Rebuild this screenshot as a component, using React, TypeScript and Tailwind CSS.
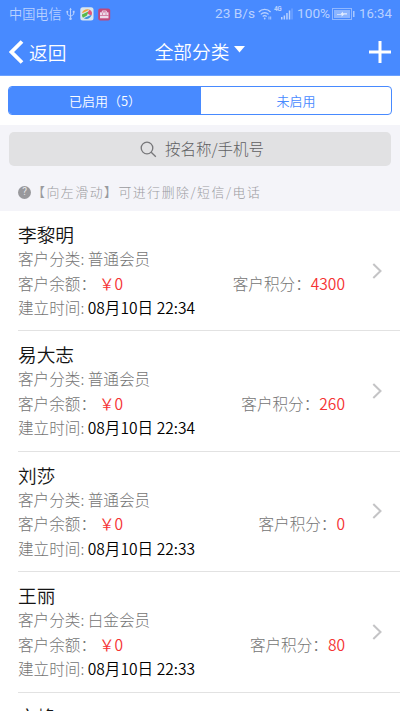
interface Customer {
  name: string;
  details?: {
    category: string;
    balance: string;
    points: string;
    created: string;
  };
}

const CUSTOMERS: Customer[] = [
  { name: "李黎明", details: { category: "普通会员", balance: "0", points: "4300", created: "08月10日 22:34" } },
  { name: "易大志", details: { category: "普通会员", balance: "0", points: "260", created: "08月10日 22:34" } },
  { name: "刘莎", details: { category: "普通会员", balance: "0", points: "0", created: "08月10日 22:33" } },
  { name: "王丽", details: { category: "白金会员", balance: "0", points: "80", created: "08月10日 22:33" } },
  { name: "文峰" },
];

function StatusBar() {
  return (
    <div className="flex h-[28px] items-center justify-between px-[9px] text-[#b9d1ff]">
      <div className="flex items-center">
        <span className="text-[13.2px] font-[350] leading-none">中国电信</span>
        <svg className="ml-[4px]" width="9" height="14" viewBox="0 0 9 14" fill="none" stroke="currentColor">
          <path d="M4.5 2v9M1.3 5v2.3L4.5 9.5l3.2-2.2V5" />
          <path d="M3.2 2.8 4.5.8l1.3 2z" fill="currentColor" stroke="none" />
          <circle cx="4.5" cy="11.7" r="1.3" fill="currentColor" stroke="none" />
          <circle cx="1.3" cy="4.7" r="1" fill="currentColor" stroke="none" />
          <path d="M6.8 3.8h1.8v1.8H6.8z" fill="currentColor" stroke="none" />
        </svg>
        <svg className="ml-[5px]" width="14" height="14" viewBox="0 0 14 14">
          <rect x=".3" y=".3" width="13.2" height="13.2" rx="2.5" fill="#d9e6ee" />
          <path d="M2 6.3c.6-3.500 5-5 8-3.500C7.500 3.300 5.500 5 2 6.300z" fill="#f2a33b" />
          <path d="M9.500 2.800c2.500 1 3.200 3.700 1.700 5.900L7 6.300z" fill="#e5567a" />
          <path d="M2 7.500 8.300 4.500 7 8.500 3 10.800C2.200 9.700 2 8.700 2 7.500z" fill="#57b84b" />
          <path d="M3.800 11.300 11.500 7.800c-.6 3.200-4.600 5.600-7.700 3.500z" fill="#3f93d8" />
        </svg>
        <svg className="ml-[4px]" width="13" height="13" viewBox="0 0 13 13">
          <rect x=".2" y=".5" width="12" height="12" rx="2" fill="#c0487a" />
          <path d="M4.300 4.300V3h4v1.300" fill="none" stroke="#eddbea" />
          <path d="M2 4.300h8.500v6H2z" fill="#eddbea" />
          <path d="M2 7.500h8.500" stroke="#c0487a" strokeWidth=".6" />
          <path d="M4 6h1M7.500 6h1" stroke="#c0487a" />
        </svg>
      </div>
      <div className="flex items-center font-['Roboto','Noto_Sans_CJK_SC',sans-serif] text-[13.7px] leading-none">
        <span className="w-[38px] whitespace-nowrap">23 B/s</span>
        <svg className="ml-[5px]" width="14" height="12" viewBox="0 0 14 12" fill="none" stroke="currentColor" strokeWidth="1.3">
          <path d="M.8 4C4 .6 9.400.6 12.600 4M2.800 6.400c2.200-2.200 5.600-2.200 7.800 0M4.700 8.600c1.200-1.100 2.800-1.100 4 0" />
          <circle cx="6.700" cy="10.500" r=".9" fill="currentColor" stroke="none" />
          <path d="M11 8.500v3M12.700 8.500v3" strokeWidth=".9" />
        </svg>
        <div className="ml-[2px] flex w-[20px] items-start">
          <span className="-mt-px w-[7px] text-[6.5px] font-bold leading-none tracking-[-0.5px]">4G</span>
          <svg className="mt-px" width="12" height="12" viewBox="0 0 12 12" fill="currentColor">
            <path d="M0 9h1.500v2.500H0zM2.600 7.500h1.500v4H2.600zM5.200 5h1.500v6.500H5.200zM7.800 2.500h1.500v9H7.800z" />
            <path d="M10.500.5h1v11h-1z" opacity=".5" />
          </svg>
        </div>
        <span className="ml-[3px] w-[31px]">100%</span>
        <svg className="ml-[4px]" width="23" height="12" viewBox="0 0 23 12">
          <rect x=".5" y=".5" width="19" height="11" fill="none" stroke="#91b8ff" />
          <rect x="2" y="2" width="16" height="8" fill="#8cb5ff" />
          <path d="M5 6h3.500L11 3.500 10.800 5.300H15V6.500h-3L9.500 8.700 9.700 6.700H5z" fill="#e4edff" />
          <rect x="21" y="3" width="1.500" height="6" fill="#a9c8ff" />
        </svg>
        <span className="ml-[4px] w-[32px] text-[13.200px]">16:34</span>
      </div>
    </div>
  );
}

function NavBar() {
  return (
    <div className="grid h-[47px] grid-cols-[1fr_auto_1fr] items-center px-[9px] text-white">
      <div className="flex items-center">
        <svg width="15" height="24" viewBox="0 0 15 24" fill="none" stroke="currentColor" strokeWidth="3.800">
          <path d="M13 1.500 2.500 12 13 22.500" />
        </svg>
        <span className="ml-[5px] mt-[1px] text-[18.700px] font-[350] leading-none">返回</span>
      </div>
      <div className="flex items-center">
        <span className="text-[18.700px] font-[350] leading-none">全部分类</span>
        <svg className="-mt-[3px] ml-[5px]" width="11" height="7" viewBox="0 0 11 7" fill="currentColor">
          <path d="M0 0h11L5.500 6.500z" />
        </svg>
      </div>
      <svg className="justify-self-end" width="22" height="22" viewBox="0 0 22 22" stroke="currentColor" strokeWidth="3">
        <path d="M11 0v22M0 11h22" />
      </svg>
    </div>
  );
}

function CustomerRow({ customer }: { customer: Customer }) {
  const { name, details } = customer;
  return (
    <li className="ml-[18px] flex h-[120.400px] border-b border-[#e2e2e2] text-[15.600px] font-light text-[#757575]">
      <div className="flex-1 pt-[10px]">
        <h2 className="h-[25px] text-[18.700px] font-[350] leading-[25px] text-[#141414]">{name}</h2>
        {details && (
          <>
            <p className="h-[24.500px] leading-[24.500px]">客户分类: {details.category}</p>
            <div className="flex h-[24.500px] justify-between leading-[24.500px]">
              <p className="flex">
                客户余额：
                <span className="ml-[3px] font-[350] text-[#f53333]">￥{details.balance}</span>
              </p>
              <p>
                客户积分：<span className="font-[350] text-[#f53333]">{details.points}</span>
              </p>
            </div>
            <p className="h-[24.500px] leading-[24.500px]">
              建立时间: <span className="font-[350] text-black">{details.created}</span>
            </p>
          </>
        )}
      </div>
      <div className="flex w-[55px] items-center pl-[27px]">
        <svg width="10" height="16" viewBox="0 0 10 16" fill="none" stroke="#c4c4c6" strokeWidth="2">
          <path d="M1.300 1 8.500 8 1.300 15" />
        </svg>
      </div>
    </li>
  );
}

export default function App() {
  return (
    <div className="flex h-[711px] w-[400px] flex-col overflow-hidden bg-white font-['Noto_Sans_CJK_SC',sans-serif]">
      <header className="h-[76px] shrink-0 border-b border-[#6ba1ff] bg-[#488aff]">
        <StatusBar />
        <NavBar />
      </header>

      <div className="h-[49px] shrink-0 px-[8px] pt-[10px]">
        <div className="flex h-[29px] overflow-hidden rounded-[4px] border border-[#488aff] text-[13px] font-[350]">
          <button type="button" className="flex w-[192px] items-center justify-center bg-[#488aff] text-white">
            已启用（5）
          </button>
          <button type="button" className="flex flex-1 items-center justify-center text-[#488aff]">
            未启用
          </button>
        </div>
      </div>

      <div className="h-[86px] shrink-0 bg-[#f4f4f9] px-[9px] pt-[7px]">
        <div className="flex h-[34px] items-center rounded-[5px] bg-[#e1e1e3] pl-[131px] text-[15.500px] text-[#5f5f62]">
          <svg width="17" height="17" viewBox="0 0 17 17" fill="none" stroke="#77777a" strokeWidth="1.300">
            <circle cx="7" cy="7" r="5.800" />
            <path d="m11.200 11.200 4.600 4.600" />
          </svg>
          <span className="ml-[8px] font-light">按名称/手机号</span>
        </div>
        <div className="mt-[16px] flex h-[20px] items-center pl-[9px] text-[12.900px] text-[#9a9a9e]">
          <span className="grid h-[13px] w-[13px] place-items-center rounded-full bg-[#98989c] font-['Roboto',sans-serif] text-[10px] leading-none text-[#e6e6ea]">
            ?
          </span>
          <span className="ml-[1px] whitespace-nowrap font-light tracking-[1.520px]">【向左滑动】可进行删除/短信/电话</span>
        </div>
      </div>

      <ul className="flex-1">
        {CUSTOMERS.map((c) => (
          <CustomerRow key={c.name} customer={c} />
        ))}
      </ul>
    </div>
  );
}
